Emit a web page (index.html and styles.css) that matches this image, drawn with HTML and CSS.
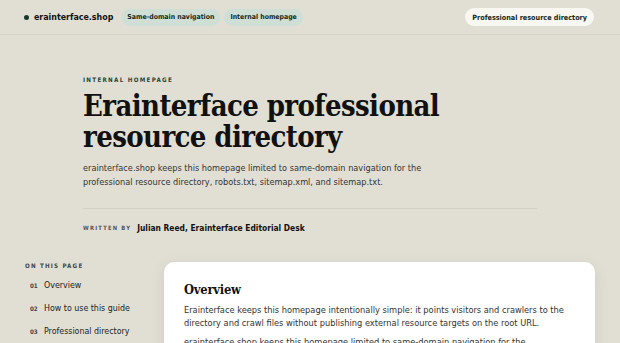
FILE: index.html
```html
<!DOCTYPE html>
<html lang="en">
<head>
<meta charset="utf-8">
<title>Erainterface professional resource directory</title>
<link rel="stylesheet" href="styles.css">
</head>
<body>
<header class="topbar">
  <div class="brand"><span class="dot"></span><span class="brand-name">erainterface.shop</span></div>
  <nav class="pills">
    <a class="pill" href="#">Same-domain navigation</a>
    <a class="pill" href="#">Internal homepage</a>
  </nav>
  <a class="pill pill-white" href="#">Professional resource directory</a>
</header>
<section class="hero">
  <div class="eyebrow">INTERNAL HOMEPAGE</div>
  <h1 class="title">Erainterface professional resource directory</h1>
  <div class="intro">
    <p class="lead">erainterface.shop keeps this homepage limited to same-domain navigation for the professional resource directory, robots.txt, sitemap.xml, and sitemap.txt.</p>
  </div>
  <div class="byline"><span class="by-label">WRITTEN BY</span><span class="by-name">Julian Reed, Erainterface Editorial Desk</span></div>
</section>
<section class="lower">
  <aside class="toc">
    <div class="toc-title">ON THIS PAGE</div>
    <ol class="toc-list">
      <li><span class="num">01</span>Overview</li>
      <li><span class="num">02</span>How to use this guide</li>
      <li><span class="num">03</span>Professional directory</li>
    </ol>
  </aside>
  <article class="card">
    <h2 class="card-title">Overview</h2>
    <p class="card-text">Erainterface keeps this homepage intentionally simple: it points visitors and crawlers to the directory and crawl files without publishing external resource targets on the root URL.</p>
    <p class="card-text">erainterface.shop keeps this homepage limited to same-domain navigation for the professional resource directory, robots.txt, sitemap.xml, and sitemap.txt.</p>
  </article>
</section>
</body>
</html>
```
FILE: styles.css
```css
* { box-sizing: border-box; }
html, body { margin: 0; padding: 0; }
body {
  background: #e1dfd4;
  font-family: "DejaVu Sans Condensed", "DejaVu Sans", Verdana, sans-serif;
  color: #222;
  overflow: hidden;
  height: 343px;
}
.topbar {
  height: 35px;
  display: flex;
  align-items: center;
  padding: 0 26px 0 24px;
  border-bottom: 1px solid #d4d2c6;
}
.brand { display: flex; align-items: center; gap: 5px; margin-right: 8px; }
.dot { width: 5px; height: 5px; border-radius: 50%; background: #17392d; }
.brand-name { font-weight: bold; font-size: 8.8px; color: #111; }
.pills { display: flex; gap: 4px; }
.pill {
  display: inline-block;
  font-size: 6.9px;
  font-weight: bold;
  color: #132a23;
  text-decoration: none;
  background: #cfdfd6;
  border-radius: 10px;
  padding: 4px 6px;
  line-height: 9px;
}
.pill-white { margin-left: auto; background: #f8f7f2; padding: 5px 7px 4px; font-size: 7.2px; }
.hero { width: 454px; margin: 0 0 0 83px; padding-top: 41px; }
.eyebrow { font-size: 6.2px; font-weight: bold; letter-spacing: 1.3px; color: #23473a; line-height: 8px; }
.title {
  font-family: "DejaVu Serif Condensed", "DejaVu Serif", Georgia, serif;
  font-weight: bold;
  font-size: 29px;
  line-height: 31px;
  margin: 7px 0 0;
  letter-spacing: -0.6px;
  color: #111;
}
.intro { border-bottom: 1px solid #d3d1c5; padding-bottom: 19px; margin-top: 8px; }
.lead { font-size: 9.1px; line-height: 14px; color: #333; margin: 0; max-width: 365px; }
.byline { display: flex; align-items: center; gap: 6px; margin-top: 14px; }
.by-label { font-size: 5.8px; font-weight: bold; letter-spacing: 1.2px; color: #555; }
.by-name { font-size: 8.4px; font-weight: bold; color: #111; }
.lower { display: flex; padding: 29px 25px 0 25px; gap: 14px; }
.toc { width: 125px; flex: none; padding-top: 0; }
.toc-title { font-size: 6.2px; font-weight: bold; letter-spacing: 1.2px; color: #444; line-height: 8px; }
.toc-list { list-style: none; margin: 9px 0 0; padding: 0 0 0 5px; }
.toc-list li { font-size: 8.8px; line-height: 12px; color: #222; margin-bottom: 10px; display: flex; align-items: baseline; }
.num { font-size: 6.2px; font-weight: bold; color: #444; width: 14px; }
.card {
  flex: 1;
  background: #fff;
  border-radius: 10px;
  padding: 20px 24px 20px 20px;
  box-shadow: 0 4px 14px rgba(80, 75, 55, 0.12);
  min-height: 120px;
}
.card-title { font-family: "DejaVu Serif Condensed", "DejaVu Serif", Georgia, serif; font-weight: bold; font-size: 12.8px; margin: 0 0 5px; line-height: 16px; color: #111; letter-spacing: -0.2px; }
.card-text { font-size: 9.2px; line-height: 13px; color: #333; margin: 0 0 6px; }
```
